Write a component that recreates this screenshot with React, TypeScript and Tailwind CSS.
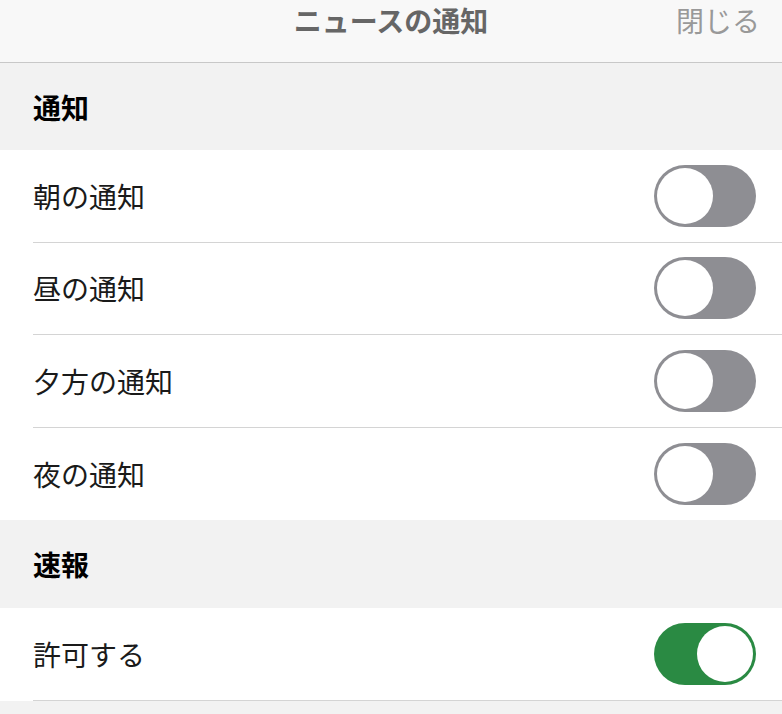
import React from "react";

const font = { fontFamily: '"Noto Sans CJK JP", "Noto Sans", sans-serif' };

function Toggle({ on }: { on: boolean }) {
  return (
    <div
      className={`flex h-[62px] w-[102px] items-center rounded-full p-[3px] ${
        on ? "justify-end bg-[#2a8a43]" : "justify-start bg-[#8e8e93]"
      }`}
    >
      <div className="h-[56px] w-[56px] rounded-full bg-white" />
    </div>
  );
}

function Row({ label, on = false, divider = true }: { label: string; on?: boolean; divider?: boolean }) {
  return (
    <div className="bg-white pl-[33px]">
      <div
        className={`flex h-[92.5px] items-center justify-between pr-[26px] ${
          divider ? "border-b border-[#d4d4d4]" : ""
        }`}
      >
        <span className="text-[28px] text-[#1a1a1a]">{label}</span>
        <Toggle on={on} />
      </div>
    </div>
  );
}

function SectionHeader({ title, h }: { title: string; h: string }) {
  return (
    <div className={`flex items-center bg-[#f2f2f2] pl-[33px] ${h}`}>
      <span className="text-[28px] font-bold text-black">{title}</span>
    </div>
  );
}

export default function App() {
  return (
    <div className="h-[714px] w-[782px] overflow-hidden bg-[#f2f2f2]" style={font}>
      <div className="relative flex h-[63px] items-start justify-center border-b border-[#c8c8c8] bg-[#f8f8f8] pt-[1px]">
        <span className="text-[28px] font-bold leading-[38px] text-[#666]">ニュースの通知</span>
        <span className="absolute right-[22px] top-[1px] text-[28px] leading-[38px] text-[#999]">閉じる</span>
      </div>
      <SectionHeader title="通知" h="h-[87px]" />
      <Row label="朝の通知" />
      <Row label="昼の通知" />
      <Row label="夕方の通知" />
      <Row label="夜の通知" divider={false} />
      <SectionHeader title="速報" h="h-[88px]" />
      <Row label="許可する" on />
    </div>
  );
}
